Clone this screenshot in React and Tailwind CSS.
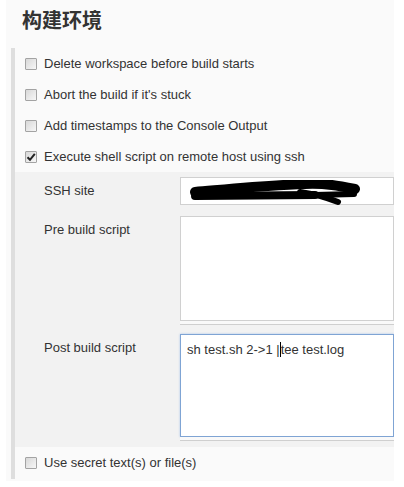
import React from 'react'

function Checkbox({ checked }) {
  return (
    <div className="w-[12px] h-[12px] shrink-0 border border-[#a3a3a3] rounded-[1px] bg-gradient-to-br from-[#d8d8d8] to-[#f7f7f7] flex items-center justify-center">
      {checked && (
        <svg width="10" height="10" viewBox="0 0 10 10">
          <path d="M1.5 5.2 L4 7.8 L8.8 1.8" fill="none" stroke="#222" strokeWidth="2" />
        </svg>
      )}
    </div>
  )
}

function CheckRow({ label, checked, h = 'h-[31px]' }) {
  return (
    <div className={`${h} flex items-center pl-[10px] gap-[7px]`}>
      <Checkbox checked={checked} />
      <span>{label}</span>
    </div>
  )
}

function Handle() {
  return <div className="h-[4px] border-b border-[#cfcfcf] bg-[#f9f9f9]" />
}

export default function App() {
  return (
    <div className="w-[404px] h-[487px] bg-white text-[13px] text-[#333] font-['Liberation_Sans',Arial,sans-serif] overflow-hidden">
      <div className="ml-[6px] w-[388px] bg-[#fafafa] pb-[2px] overflow-hidden">
        <h2 className="pl-[16px] pt-[6px] leading-[28px] text-[20px] font-bold text-[#333] font-['Noto_Sans_CJK_SC',sans-serif]">
          构建环境
        </h2>
        <div className="ml-[5px] mt-[14px] border-l-4 border-[#dedede]">
          <CheckRow label="Delete workspace before build starts" />
          <CheckRow label="Abort the build if it's stuck" />
          <CheckRow label="Add timestamps to the Console Output" />
          <CheckRow label="Execute shell script on remote host using ssh" checked />

          <div className="bg-[#f2f2f2] pl-[29px] pt-[5px] pb-[6px]">
            <div className="flex">
              <div className="w-[136px] leading-[28px]">SSH site</div>
              <div className="flex-1 h-[28px] bg-white border border-[#d0d0d0] flex items-center pl-[9px]">
                <svg width="172" height="26" viewBox="0 0 172 26" className="mt-[4px]">
                  <path d="M5 12 C 40 9, 80 5, 115 4 C 135 3, 150 6, 165 9" fill="none" stroke="#000" strokeWidth="10" strokeLinecap="round" />
                  <path d="M5 16 L 125 15" fill="none" stroke="#000" strokeWidth="8" strokeLinecap="round" />
                  <path d="M110 12 C 125 14, 138 18, 148 22" fill="none" stroke="#000" strokeWidth="6" strokeLinecap="round" />
                  <path d="M125 15 L 164 14" fill="none" stroke="#000" strokeWidth="6" strokeLinecap="round" />
                </svg>
              </div>
            </div>

            <div className="flex mt-[11px]">
              <div className="w-[136px] leading-[28px]">Pre build script</div>
              <div className="flex-1">
                <div className="h-[105px] bg-white border border-[#d0d0d0]" />
                <Handle />
              </div>
            </div>

            <div className="flex mt-[9px]">
              <div className="w-[136px] leading-[28px]">Post build script</div>
              <div className="flex-1">
                <div className="h-[103px] bg-white border border-[#7fa4d4] shadow-[0_0_2px_#a8c4e8] pl-[6px] pt-[7px] leading-[16px] whitespace-nowrap">
                  sh test.sh 2-&gt;1 |<span className="inline-block w-0 h-[15px] border-l border-black align-[-3px]" />tee test.log
                </div>
                <Handle />
              </div>
            </div>
          </div>

          <CheckRow label="Use secret text(s) or file(s)" h="h-[32px]" />
        </div>
      </div>
    </div>
  )
}
